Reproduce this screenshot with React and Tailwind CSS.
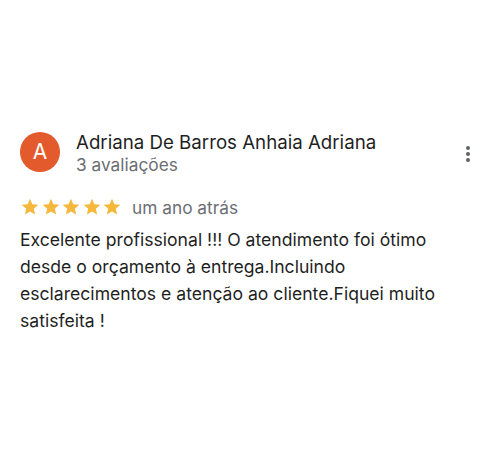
import React from "react";

function Star() {
  return (
    <svg width="20" height="20" viewBox="0 0 24 24" className="block shrink-0">
      <path
        fill="#f5b83d"
        d="M12 17.27L18.18 21l-1.64-7.03L22 9.24l-7.19-.61L12 2 9.19 8.63 2 9.24l5.46 4.73L5.82 21z"
      />
    </svg>
  );
}

export default function App() {
  return (
    <div
      className="w-[500px] h-[466px] bg-white pt-[132px] pl-[20px] pr-[20px]"
      style={{ fontFamily: "Inter, 'Noto Sans', sans-serif" }}
    >
      <div className="flex items-start">
        <div className="w-[40px] h-[40px] rounded-full bg-[#e35a2d] flex items-center justify-center text-white text-[21px] shrink-0">
          A
        </div>
        <div className="ml-[16px] flex-1">
          <div className="text-[18.7px] leading-[22px] text-[#1f1f1f] whitespace-nowrap">
            Adriana De Barros Anhaia Adriana
          </div>
          <div className="text-[17.3px] leading-[21px] text-[#6b6e72]">3 avaliações</div>
        </div>
        <div className="mt-[14px] mr-[10px] flex flex-col gap-[2px] items-center">
          <span className="block w-[4px] h-[4px] rounded-full bg-[#5f6368]" />
          <span className="block w-[4px] h-[4px] rounded-full bg-[#5f6368]" />
          <span className="block w-[4px] h-[4px] rounded-full bg-[#5f6368]" />
        </div>
      </div>
      <div className="flex items-start mt-[22px]">
        <div className="flex gap-[0.5px] mt-[-0.5px]">
          <Star />
          <Star />
          <Star />
          <Star />
          <Star />
        </div>
        <span className="ml-[10px] mt-[1px] text-[17.3px] leading-[20px] text-[#6b6e72]">um ano atrás</span>
      </div>
      <p className="mt-[8px] text-[17.6px] leading-[27px] text-[#1f1f1f]">
        Excelente profissional !!! O atendimento foi ótimo desde o orçamento à entrega.Incluindo esclarecimentos e atenção ao cliente.Fiquei muito satisfeita !
      </p>
    </div>
  );
}
